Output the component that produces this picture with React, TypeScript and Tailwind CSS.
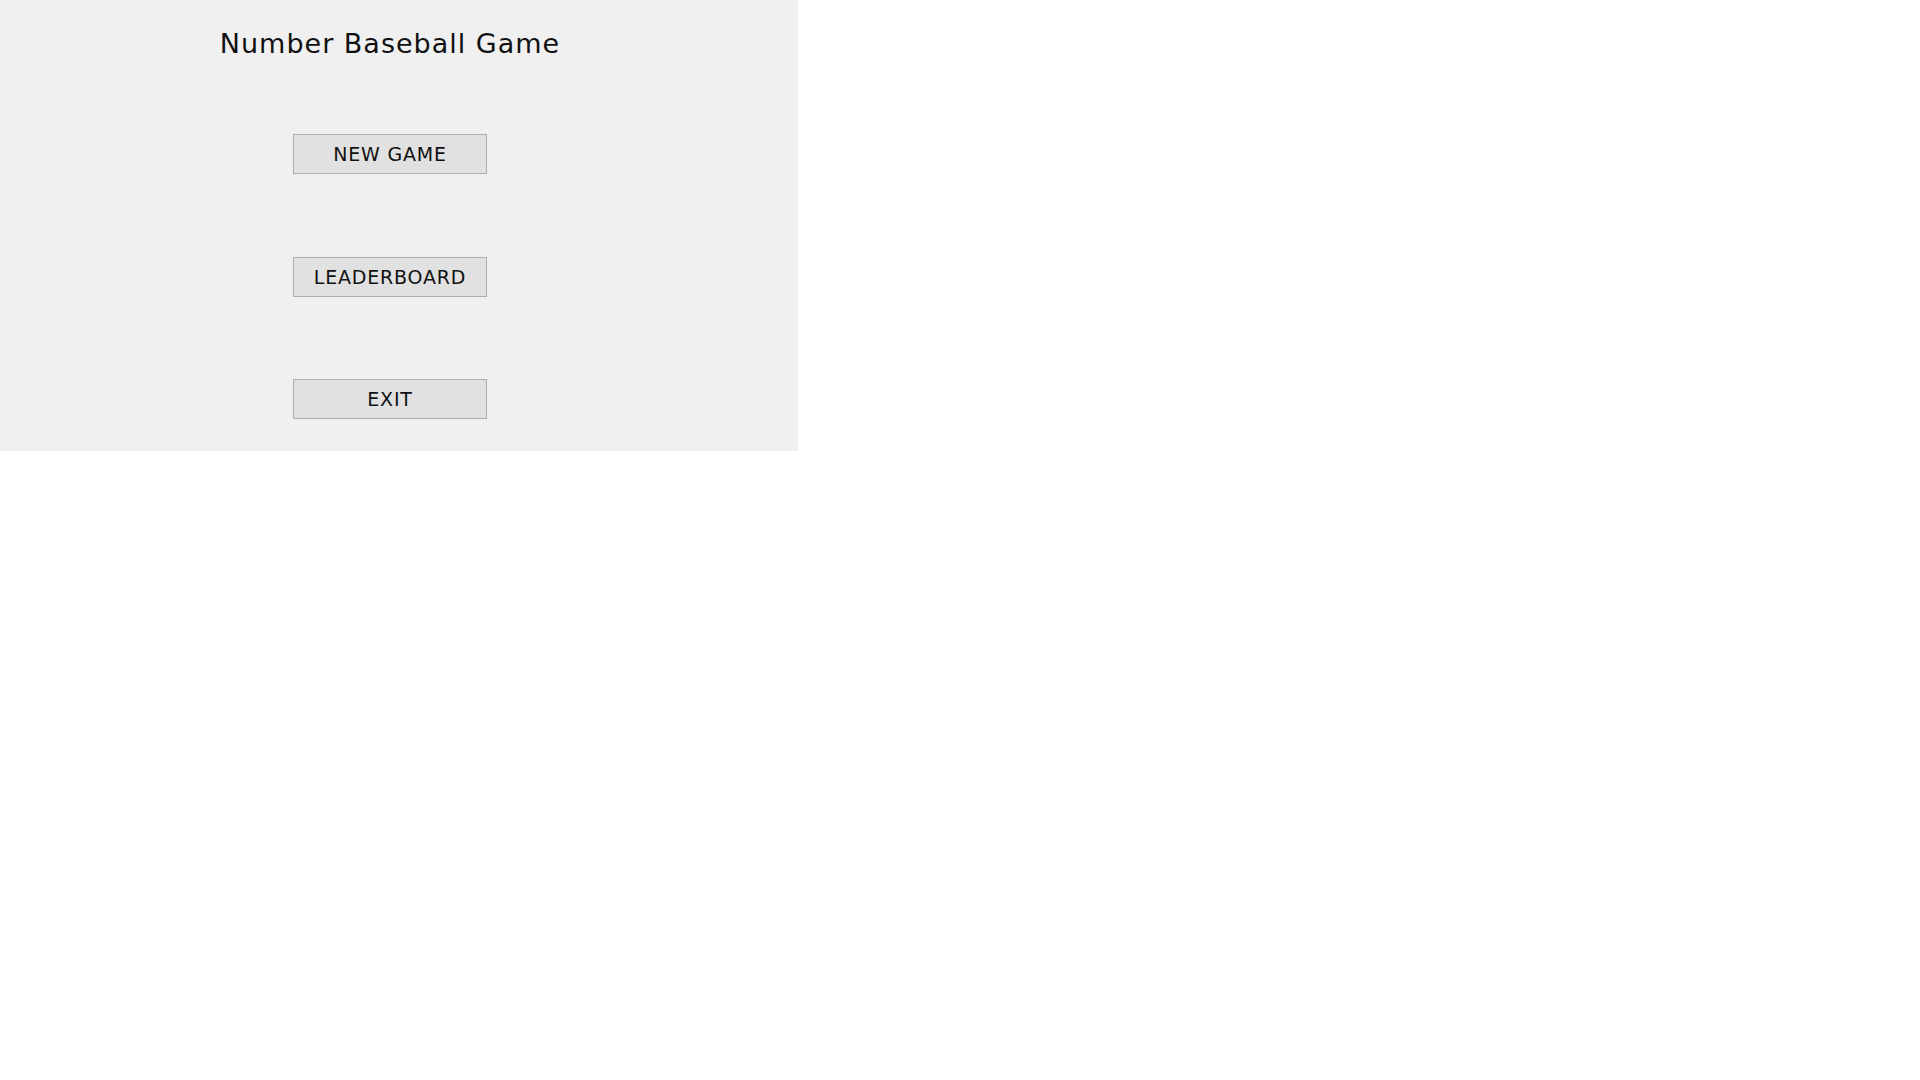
import React from "react";

export default function App() {
  const btn =
    "w-[194px] h-[40px] bg-[#e1e1e1] border border-[#adadad] text-[19px] tracking-[0.8px] text-[#111] flex items-center justify-center leading-none";
  return (
    <div className="w-[1920px] h-[1080px] bg-white" style={{ fontFamily: '"Century Gothic", "DejaVu Sans", sans-serif' }}>
      <div className="w-[798px] h-[451px] bg-[#f0f0f0]">
        <div className="w-[780px] flex flex-col items-center">
          <div className="mt-[26px] h-[36px] text-[27px] tracking-[1px] leading-[36px] text-[#111]">Number Baseball Game</div>
          <button className={btn + " mt-[72px]"}>NEW GAME</button>
          <button className={btn + " mt-[83px]"}>LEADERBOARD</button>
          <button className={btn + " mt-[82px]"}>EXIT</button>
        </div>
      </div>
    </div>
  );
}
